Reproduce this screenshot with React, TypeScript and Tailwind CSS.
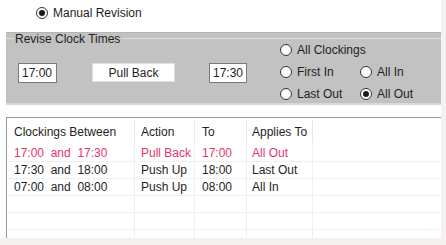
import React from "react";

const Radio = ({ checked }: { checked?: boolean }) => (
  <span className="w-[12px] h-[12px] rounded-full border border-[#333] bg-white flex items-center justify-center shrink-0">
    {checked && <span className="w-[6px] h-[6px] rounded-full bg-[#1a1a1a]" />}
  </span>
);

const RadioLabel = ({ label, checked, w }: { label: string; checked?: boolean; w?: string }) => (
  <div className={`flex items-center gap-[5px] ${w ?? ""}`}>
    <Radio checked={checked} />
    <span>{label}</span>
  </div>
);

const rows = [
  { between: "17:00  and  17:30", action: "Pull Back", to: "17:00", applies: "All Out", red: true },
  { between: "17:30  and  18:00", action: "Push Up", to: "18:00", applies: "Last Out" },
  { between: "07:00  and  08:00", action: "Push Up", to: "08:00", applies: "All In" },
  { between: "", action: "", to: "", applies: "" },
  { between: "", action: "", to: "", applies: "" },
  { between: "", action: "", to: "", applies: "" },
];

export default function App() {
  return (
    <div
      className="w-[446px] h-[245px] bg-[#f6f1f1] overflow-hidden text-[12px] text-[#1e1e24] leading-none"
      style={{ fontFamily: '"Liberation Sans", Arial, sans-serif' }}
    >
      <div className="w-[441px] h-[238px] bg-white flex flex-col overflow-hidden">
        <div className="h-[32px] shrink-0 pl-[36px] flex items-center pb-[6px]">
          <RadioLabel label="Manual Revision" checked />
        </div>
        <div className="ml-[6px] h-[73px] shrink-0 bg-[#c2c2c2] border-t border-[#b4b4b4] border-b-2 border-b-[#d8d8d8] relative">
          <div className="absolute left-0 right-0 top-[5px] h-px bg-[#dcdcdc]" />
          <div className="relative flex">
            <span className="ml-[8px] px-[1px] bg-[#c2c2c2] leading-[12px]">Revise Clock Times</span>
          </div>
          <div className="flex mt-[17px] ml-[12px] items-start">
            <div className="w-[39px] h-[20px] mt-[1px] bg-white border border-[#7a7a7a] flex items-center pl-[3px]">17:00</div>
            <div className="ml-[35px] w-[83px] h-[19px] mt-[1px] bg-white border border-[#e0e0e0] flex items-center justify-center">Pull Back</div>
            <div className="ml-[34px] w-[38px] h-[20px] mt-[1px] bg-white border border-[#7a7a7a] flex items-center pl-[3px]">17:30</div>
          </div>
          <div className="absolute left-[274px] top-[11px] flex flex-col gap-[10px]">
            <RadioLabel label="All Clockings" />
            <div className="flex">
              <RadioLabel label="First In" w="w-[80px]" />
              <RadioLabel label="All In" />
            </div>
            <div className="flex">
              <RadioLabel label="Last Out" w="w-[80px]" />
              <RadioLabel label="All Out" checked />
            </div>
          </div>
        </div>
        <div className="ml-[6px] mt-[12px] shrink-0 h-[121px] overflow-hidden border border-[#9a9a9a] border-r-0 border-b-0 bg-white">
          <div className="flex h-[27px] items-center">
            <div className="w-[128px] pl-[7px] h-[23px] flex items-center border-r border-[#e8e8e8]">Clockings Between</div>
            <div className="w-[60px] pl-[6px] h-[23px] flex items-center border-r border-[#e8e8e8]">Action</div>
            <div className="w-[52px] pl-[7px] h-[23px] flex items-center border-r border-[#e8e8e8]">To</div>
            <div className="w-[66px] pl-[5px] h-[23px] flex items-center border-r border-[#e8e8e8]">Applies To</div>
          </div>
          {rows.map((r, i) => (
            <div
              key={i}
              className={`flex h-[17px] items-center border-b border-[#efefef] ${r.red ? "text-[#e8336b]" : ""}`}
            >
              <div className="w-[128px] pl-[7px] h-full flex items-center border-r border-[#efefef] whitespace-pre">{r.between}</div>
              <div className="w-[60px] pl-[6px] h-full flex items-center border-r border-[#efefef]">{r.action}</div>
              <div className="w-[52px] pl-[7px] h-full flex items-center border-r border-[#efefef]">{r.to}</div>
              <div className="w-[66px] pl-[5px] h-full flex items-center border-r border-[#efefef]">{r.applies}</div>
            </div>
          ))}
        </div>
      </div>
    </div>
  );
}
